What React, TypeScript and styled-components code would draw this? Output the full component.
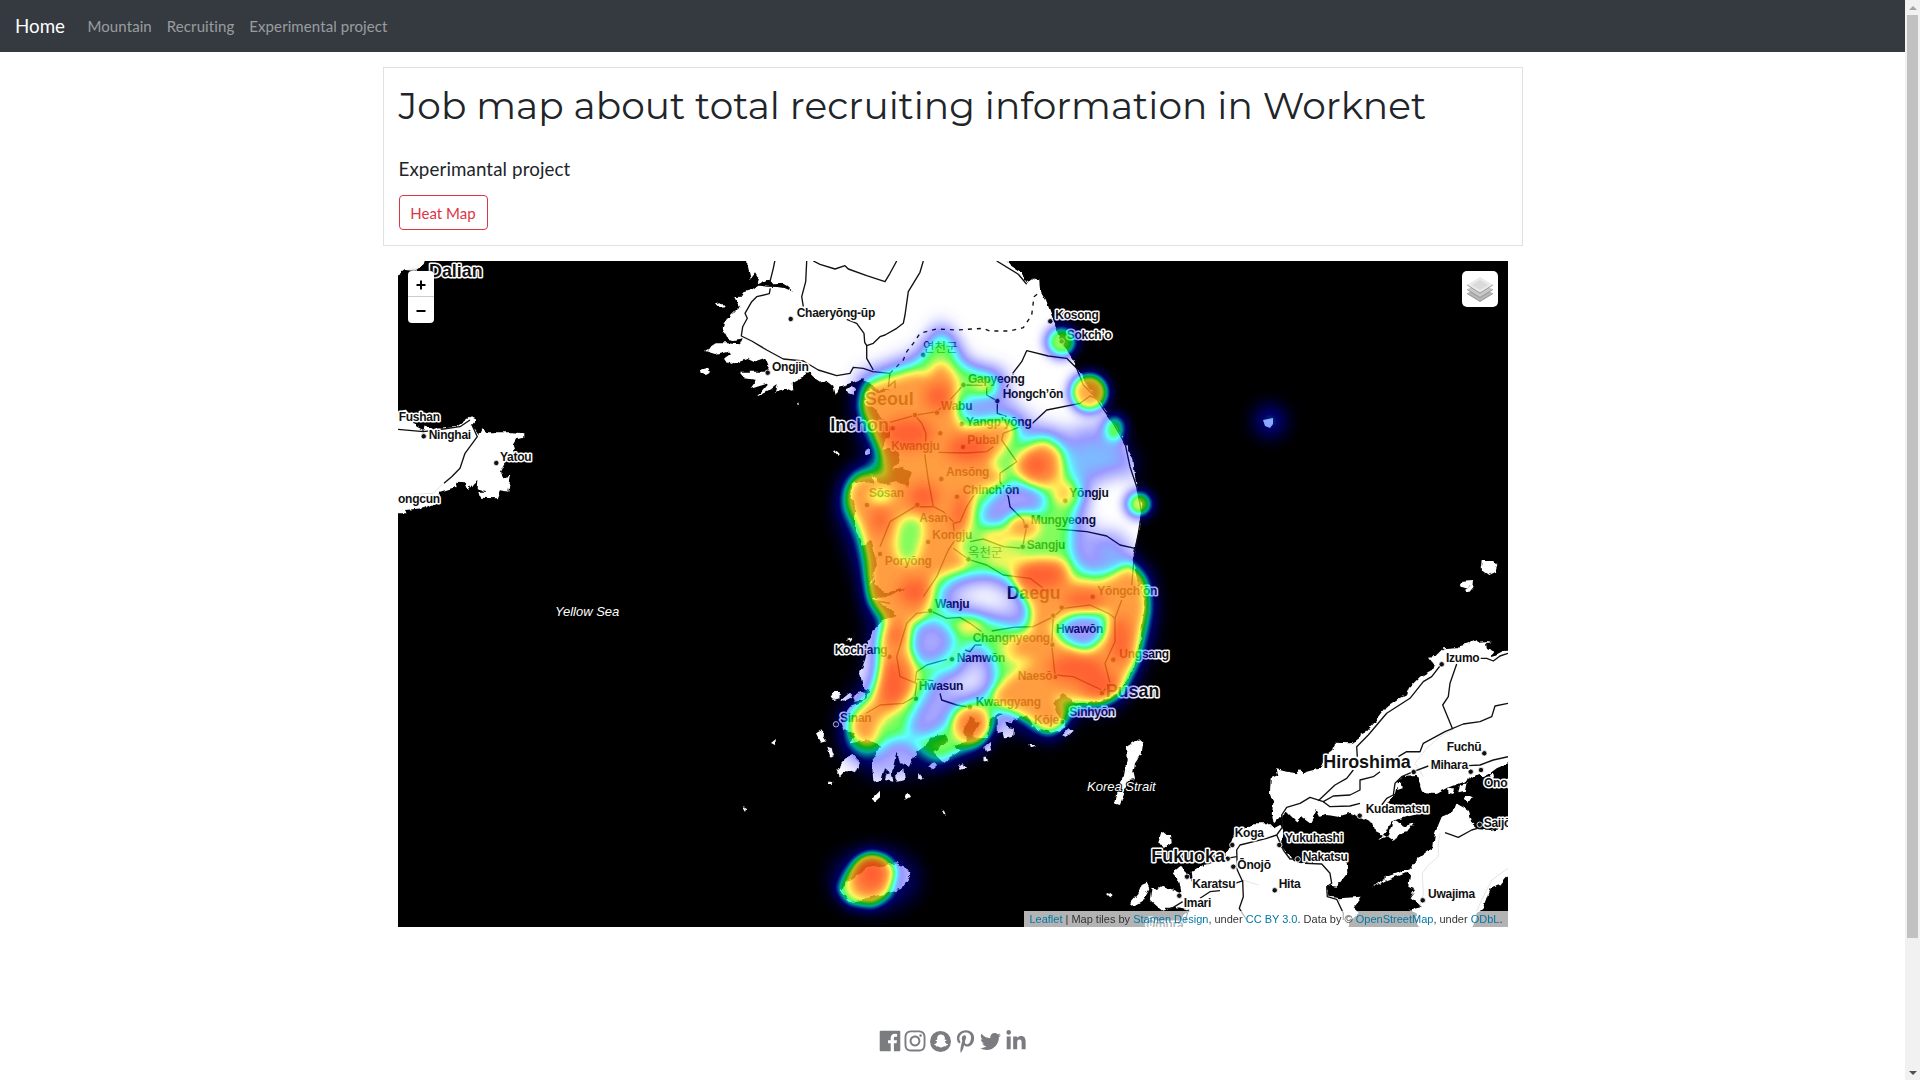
import React from "react";
import styled, { createGlobalStyle } from "styled-components";
import { FaInstagram, FaSnapchatGhost, FaPinterestP, FaTwitter, FaLinkedinIn } from "react-icons/fa";

const GlobalStyle = createGlobalStyle`
  *, *::before, *::after { box-sizing: border-box; }
  html, body { margin: 0; height: 1080px; overflow: hidden; background: #fff; }
  body { font: 400 15px/1.5 Lato, sans-serif; color: #212529; }
  a { text-decoration: none; }
`;

const Shell = styled.div`display: flex; width: 1920px; height: 1080px; overflow: hidden;`;
const Page = styled.div`flex: 1; min-width: 0; display: flex; flex-direction: column; align-items: center;`;
const Navbar = styled.nav`
  align-self: stretch; height: 52px; flex: none; display: flex; align-items: center;
  padding: 0 15px; background: #343a40;
`;
const Brand = styled.a`font-size: 18.75px; color: #fff; margin-right: 15px;`;
const NavLink = styled.a`padding: 0 7.5px; color: rgba(255, 255, 255, 0.5); letter-spacing: 0.09px;`;
const Intro = styled.header`
  width: 1140px; height: 179px; margin-top: 15px; padding: 15px; border: 1px solid #dee2e6;
  display: flex; flex-direction: column; align-items: flex-start;
`;
const Title = styled.h1`
  margin: 0; font: 400 37.5px/45px Montserrat, Inter, sans-serif; letter-spacing: 0.04px; white-space: nowrap;
`;
const Subtitle = styled.h2`margin: 29px 0 0; font: 400 18.75px/23px Lato, sans-serif; letter-spacing: 0.1px;`;
const OutlineButton = styled.button`
  margin-top: 15px; height: 35px; width: 89px; padding: 0; border: 1px solid #dc3545; border-radius: 4px;
  background: transparent; color: #dc3545; font: 400 15px Lato, sans-serif;
`;
const MapFrame = styled.main`
  position: relative; width: 1110px; height: 666px; margin-top: 15px; flex: none; overflow: hidden; background: #000;
`;
const MapDrawing = styled.svg`display: block; width: 1110px; height: 666px;`;
const ZoomControl = styled.div`
  position: absolute; left: 10px; top: 10px; width: 26px; border-radius: 4px; background: #fff;
  overflow: hidden; box-shadow: 0 1px 5px rgba(0, 0, 0, 0.65);
`;
const ZoomButton = styled.div<{ $divided?: boolean }>`
  height: 26px; display: flex; align-items: center; justify-content: center;
  padding-top: ${(p) => (p.$divided ? 3 : 2)}px;
  border-bottom: ${(p) => (p.$divided ? "1px solid #ccc" : "0")};
  svg { display: block; }
`;
const LayersControl = styled.div`
  position: absolute; right: 10px; top: 10px; width: 36px; height: 36px; border-radius: 5px; background: #fff;
  display: grid; place-items: center;
`;
const Attribution = styled.div`
  position: absolute; right: 0; bottom: 0; height: 16px; padding: 0 5px; white-space: nowrap;
  font: 11px/16px "Liberation Sans", Arial, sans-serif; color: #333; background: rgba(255, 255, 255, 0.7);
  a { color: #0078a8; }
`;
const Social = styled.footer`
  margin-top: 101px; height: 26px; padding-left: 2px; display: flex; align-items: center; gap: 4px; color: #7b7c80;
  svg { display: block; }
`;
const Scrollbar = styled.div`
  width: 15px; flex: none; background: #f1f1f1; display: flex; flex-direction: column; align-items: center;
`;
const Arrow = styled.div<{ $down?: boolean }>`
  height: 15px; display: grid; place-items: center;
  &::before {
    content: ""; border: 4px solid transparent; border-top-width: ${(p) => (p.$down ? 4 : 0)}px;
    border-bottom-width: ${(p) => (p.$down ? 0 : 4)}px;
    border-top-color: #505050; border-bottom-color: ${(p) => (p.$down ? "#505050" : "#a3a3a3")};
  }
`;
const Thumb = styled.div`width: 11px; height: 923px; background: #c1c1c1; margin-bottom: auto;`;

// Map sheets are digitised at three units per pixel; each has its own origin.
type Sheet = [number, number];
const NORTH: Sheet = [690, 255];
const MID: Sheet = [800, 300];
const SOUTH: Sheet = [800, 560];
const JAPAN: Sheet = [1120, 560];
const CHINA: Sheet = [390, 255];

const place = ([ox, oy]: Sheet, points: string) =>
  points.trim().split(/\s+/).map((p) => {
    const [x, y] = p.replace("M", "").split(",").map(Number);
    return `${p.startsWith("M") ? "M" : ""}${(ox + x / 3).toFixed(1)},${(oy + y / 3).toFixed(1)}`;
  }).join(" ");

const shape = (...parts: [Sheet, string][]) => "M" + parts.map(([s, p]) => place(s, p)).join(" ") + "Z";
const line = (s: Sheet, p: string) => "M" + place(s, p);

const KOREA = shape(
  [NORTH, "172,0 172,30 182,72 195,55 205,70 200,88 235,74 245,85 275,84 290,92 310,110 285,100 262,96 235,95 205,92 190,103 160,112 155,125 133,126 140,140 148,155 128,175 108,195 98,230 108,248 130,255 158,250 150,268 110,265 80,265 45,288 75,297 110,288 120,298 105,308 120,330 150,318 175,308 200,320 230,310 238,330 232,350 200,350 150,350 165,370 200,375 180,402 235,385 200,425 240,405 260,390 255,410 290,400 310,408 308,385 335,370 350,345 370,365 400,385 415,380 430,392 437,420 450,395 480,385 520,370 565,405 600,405"],
  [MID, "235,280 210,265 205,310 230,330 240,350 270,380 270,410 250,430 245,450 285,440 300,480 280,510 310,500 335,520 325,560 300,545 260,552 240,550 210,520 225,550 160,545 150,580 165,620 165,680 185,740 215,720 230,790 210,860"],
  [SOUTH, "220,60 250,100 315,85 270,110 215,115 260,140 290,165 250,180 220,210 205,245 195,300 180,340 190,385 215,390 185,430 150,440 120,480 130,510 165,520 150,550 210,540 240,560 215,600 220,665 245,660 255,625 275,640 290,575 300,610 330,620 350,575 380,555 390,530 430,525 445,540 420,560 400,575 430,605 480,570 460,555 500,545 490,510 510,470 540,490 515,535 560,530 570,480 600,460 640,480 680,465 700,500 760,520 800,500 775,470 760,430 790,400 830,430 900,425 960,400 1000,330 1020,260 1025,200 1035,130 1012,60 998,0"],
  [MID, "1005,740 1015,700 1025,620 1005,530 1000,480 960,400 900,310 850,240 820,180 780,120 760,60 738,0"],
  [NORTH, "1068,135 1050,105 1048,75 1030,70 1015,80 990,50 960,30 935,0"],
);

const LAND = [
  KOREA,
  shape([JAPAN, "1220,260 1164,270 1135,285 1110,292 1120,275 1100,265 1098,250 1115,245 1080,248 1060,238 1045,250 1020,255 1010,265 970,268 950,287 927,290 942,310 935,330 900,350 870,380 860,405 830,420 800,440 770,480 740,515 720,525 715,540 690,550 645,548 640,570 620,585 600,625 560,635 550,642 540,627 530,640 500,635 470,628 475,645 452,655 450,700 460,730 455,760 462,790 480,770 500,755 530,785 545,772 570,790 590,750 600,770 620,765 650,770 690,758 720,770 760,790 765,812 800,830 775,840 800,812 812,785 860,770 910,758 915,735 880,745 830,735 800,730 825,700 835,660 850,648 890,645 905,690 915,700 950,702 990,680 1030,665 1060,650 1075,640 1090,650 1110,640 1130,625 1164,610 1220,600"]),
  shape([JAPAN, "335,850 350,810 380,805 400,790 445,790 462,805 480,795 490,820 485,860 510,890 540,910 590,905 680,900 682,940 650,980 620,975 625,1010 660,1015 725,1010 700,1040 720,1060 690,1080 680,1125 170,1125 190,1065 210,1050 165,1040 130,1055 90,1020 95,980 110,990 130,978 160,990 185,1002 178,965 155,940 180,920 200,945 220,970 215,935 250,915 300,905 320,880"]),
  shape([JAPAN, "1010,728 1040,745 1055,790 1075,808 1110,810 1220,790 1220,940 1164,945 1140,975 1110,985 1090,1040 1070,1060 1050,1125 900,1125 890,1060 865,1050 905,1040 870,1010 885,990 865,980 870,950 860,935 800,960 760,980 800,950 870,925 900,890 940,860 945,820 965,770 1000,755"]),
  shape([CHINA, "-20,465 24,472 45,462 60,485 80,515 100,525 105,512 140,523 200,515 240,485 258,495 245,512 265,540 275,518 290,532 370,532 400,535 400,545 380,550 368,570 375,592 345,620 330,650 340,670 362,665 355,710 330,705 320,730 270,728 265,710 290,710 260,700 262,675 250,685 235,705 225,682 195,680 200,695 150,710 145,740 100,760 45,765 50,775 -20,775"]),
  shape([CHINA, "-20,0 108,0 98,30 75,48 45,45 24,60 -20,80"]),
  shape([SOUTH, "1018,535 1030,545 1025,580 1005,610 1000,635 1005,658 985,660 978,685 970,705 960,735 943,730 950,690 970,655 980,600 978,560"]),
  shape([SOUTH, "140,965 200,925 290,910 315,920 333,945 300,990 240,1005 150,1027 122,995"]),
  shape([JAPAN, "125,812 140,825 153,825 155,850 130,865 115,845"]),
  shape([JAPAN, "80,968 88,985 70,1020 40,1038 30,1030 55,1000 65,975"]),
  shape([JAPAN, "1085,0 1120,0 1132,15 1125,35 1105,45 1082,28"]),
  shape([JAPAN, "1018,80 1030,62 1062,60 1060,82 1045,100 1035,90 1055,75 1040,85"]),
  shape([JAPAN, "820,780 840,790 850,800 885,790 870,810 840,820 825,845 805,830"]),
  shape([JAPAN, "1020,675 1040,670 1035,695 1015,700"]),
  shape([JAPAN, "985,685 1005,685 1000,702 985,698"]),
  shape([JAPAN, "1040,705 1055,712 1045,728 1033,720"]),
  shape([JAPAN, "1110,645 1120,640 1122,655 1112,660"]),
  shape([JAPAN, "830,670 845,668 848,685 832,690"]),
  shape([SOUTH, "108,640 125,610 155,580 180,605 165,640 140,630 120,652"]),
  shape([SOUTH, "260,640 275,635 280,665 255,660"]),
  shape([SOUTH, "285,650 310,625 315,660 295,665"]),
  shape([SOUTH, "590,470 610,460 640,480 635,490 615,485 620,500 642,505 640,530 615,535 610,515 590,520"]),
  shape([SOUTH, "218,715 240,692 240,712 225,725"]),
  shape([SOUTH, "312,705 322,698 330,710 318,718"]),
  shape([SOUTH, "92,410 105,390 120,395 118,415 102,420"]),
  shape([SOUTH, "120,420 145,400 160,400 155,412 130,425"]),
  shape([SOUTH, "160,408 180,395 200,400 190,420 165,425"]),
  shape([SOUTH, "48,520 70,508 68,530 78,545 62,548"]),
  shape([SOUTH, "82,560 95,565 102,585 92,590"]),
  shape([SOUTH, "140,240 160,232 152,245"]),
  shape([SOUTH, "350,655 358,640 372,658 362,662"]),
  shape([SOUTH, "475,615 488,610 495,625 482,630"]),
  shape([SOUTH, "385,620 400,605 415,615 400,628"]),
  shape([SOUTH, "545,590 560,590 565,605 555,600"]),
  shape([SOUTH, "552,560 570,545 572,570 558,575"]),
  shape([SOUTH, "685,553 705,560 690,565"]),
  shape([SOUTH, "785,525 805,505 818,515 800,532"]),
  shape([SOUTH, "84,665 100,665 98,672 86,672"]),
  shape([SOUTH, "428,748 434,750 440,764 432,760"]),
  shape([SOUTH, "918,1005 930,998 938,1005 928,1015"]),
  shape([NORTH, "78,145 92,142 105,157 90,158"]),
  shape([NORTH, "30,345 55,338 60,352 45,360 32,355"]),
  shape([NORTH, "318,442 325,442 326,450 320,450"]),
  shape([NORTH, "432,592 440,588 450,598 442,602"]),
  shape([NORTH, "525,588 540,580 540,595 530,598"]),
  shape([NORTH, "468,402 485,395 495,405 490,420 475,415"]),
  "M771,743 776,739 775,745Z", "M743,806 747,808 746,811Z",
];

const ROADS = [
  line(NORTH, "258,0 250,40 240,80"),
  line(NORTH, "241,100 238,116 200,125 185,140 165,175 172,190 158,215 154,243 185,258 230,285 280,312 340,318 385,345 440,362 480,355 490,337 520,340 548,350 600,355"),
  line(NORTH, "350,18 347,80 335,125 340,155"),
  line(NORTH, "370,18 390,28 435,42 465,32 475,42 530,62 585,80 600,55 620,18"),
  line(NORTH, "470,193 500,205 522,235 524,262 530,272 530,310 550,345"),
  line(NORTH, "700,18 690,52 655,110 645,180 640,205 620,220 585,240 570,245 550,265 530,272"),
  line(NORTH, "920,18 985,58 1010,88"),
  line(NORTH, "600,355 595,395 615,378 615,400"),
  line(MID, "638,220 665,185 680,152 745,168 800,175 830,205 850,255 885,290 905,320 940,370 975,430 990,500 1010,560 1025,640 1015,700 1005,750"),
  line(MID, "620,262 640,222 M695,372 740,330 840,310 870,288 890,295"),
  line(MID, "490,255 560,256 560,285 592,303 592,340 620,350"),
  line(MID, "344,346 365,370 378,400 375,470 385,540 400,620 430,635 460,665"),
  line(MID, "270,367 344,346 410,335 450,300 490,255"),
  line(MID, "415,457 500,459 560,455 580,440"),
  line(MID, "660,380 610,400 605,420 650,485 600,520 600,545 625,590 630,620 670,660 678,690 668,740"),
  line(MID, "525,580 500,620 480,665 460,670 465,720 445,750 410,830 370,890"),
  line(MID, "398,620 345,620 270,665 240,740"),
  line(MID, "770,687 860,695 920,708 960,735 1005,745 995,855"),
  line(MID, "510,725 550,717 610,740 668,745"),
  line(MID, "460,745 505,778 560,795 610,825 690,835 730,865 760,900"),
  line(SOUTH, "390,155 350,160 320,190 290,290 300,350 350,370 345,410 310,430 240,435 190,465"),
  line(SOUTH, "215,120 270,130 M390,152 440,175 480,172 510,190 545,215"),
  line(SOUTH, "575,213 640,202 700,200 760,170 790,145 870,135 925,160 945,175 965,120"),
  line(SOUTH, "945,175 945,245 915,310 930,370 905,400"),
  line(SOUTH, "760,165 755,255 765,345 820,350 905,390"),
  line(SOUTH, "345,370 350,335 380,315 440,298 M495,270 510,275 525,255 545,255"),
  line(SOUTH, "350,358 400,362 M420,400 425,420 470,435 510,442"),
  line(JAPAN, "962,315 935,350 910,365 870,415 800,460 745,525 710,560 712,590 M700,630 680,655 645,675 595,722"),
  line(JAPAN, "1010,312 990,370 985,410 968,435 998,508"),
  line(JAPAN, "1164,430 1125,438 1115,470 1080,485 1030,492 975,515 910,550 900,575 860,575 835,590"),
  line(JAPAN, "780,635 760,650 720,660 720,690 690,705 640,708 610,725 570,712 540,730 500,742 485,765 488,800 470,825 440,835 360,855 350,870 352,930 368,965 370,1010 358,1045 380,1080"),
  line(JAPAN, "610,725 630,740 690,738 720,730 M785,735 800,715 820,705 825,670 845,650 880,635 925,618"),
  line(JAPAN, "1045,617 1080,615 1120,600 1164,590 M1080,295 1100,295 1120,303 1140,288 1164,280"),
  line(JAPAN, "470,825 490,870 510,897 530,897 M555,910 605,912 630,940 635,970 620,980 622,1010 650,1018 670,1060 670,1080"),
  line(JAPAN, "320,895 350,890 M345,970 370,962 M240,1015 270,995 300,992 M188,1025 155,1045 135,1045 M205,1050 195,1085"),
  line(JAPAN, "975,818 1015,832 1055,810 1080,803"),
  line(CHINA, "24,523 100,530 140,525 210,515 240,495 M245,508 262,545 225,595 210,640 185,665 162,685"),
];
const MINOR_ROADS = [
  line(JAPAN, "998,508 960,530 920,565 885,610 910,650 M960,820 955,850 955,890 925,915 907,940 910,1000 900,1040 M1164,925 1115,960 1080,1030 1060,1080 M370,960 415,975"),
  line(CHINA, "160,685 130,715 70,718"),
];
const BORDER = line(NORTH, "600,355 640,315 650,290 670,265 690,235 740,222 800,225 880,220 900,228 960,228 1000,218 1025,180 1032,125 1045,115");

const CITIES: [Sheet, string][] = [
  [NORTH, "302,192 233,353 820,390 922,438 741,473 815,507 751,535 819,576 754,672 801,725 675,480 608,520 1081,199 1115,259 700,300"],
  [MID, "796,602 678,679 668,740 384,726 505,778 240,762 201,615 352,615 878,890"],
  [SOUTH, "390,152 785,143 760,167 268,290 456,298 757,254 765,351 940,299 906,400 348,416 510,442 108,493 787,485"],
  [JAPAN, "965,313 1093,580 1052,635 1083,630 881,636 719,767 337,855 478,855 323,896 340,920 533,898 201,950 464,991 178,1007 908,1021 1079,794"],
  [CHINA, "101,544 319,624"],
];
const DOTS = CITIES.flatMap(([s, p]) => p.split(" ").map((q) => place(s, q).split(",")));

type Label = [Sheet, number, number, string, number?];
const LABELS: Label[] = [
  [CHINA, 117, 65, "Dalian", 17.9], [CHINA, 26, 498, "Fushan"], [CHINA, 116, 551, "Ninghai"],
  [CHINA, 330, 617, "Yatou"], [CHINA, 24, 745, "ongcun"],
  [NORTH, 320, 186, "Chaeryŏng-ŭp"], [NORTH, 246, 347, "Ongjin"],
  [MID, 766, 56, "Kosong"], [MID, 800, 117, "Sokch’o"], [MID, 504, 248, "Gapyeong"],
  [MID, 608, 295, "Hongch’ŏn"], [MID, 423, 330, "Wabu"], [MID, 498, 379, "Yangp’yŏng"],
  [MID, 502, 433, "Pubal"], [MID, 195, 316, "Seoul", 17.9], [MID, 91, 393, "Inchon", 17.9],
  [MID, 274, 450, "Kwangju"], [MID, 438, 529, "Ansŏng"], [MID, 488, 582, "Chinch’ŏn"],
  [MID, 207, 590, "Sŏsan"], [MID, 808, 592, "Yŏngju"], [MID, 358, 665, "Asan"],
  [MID, 692, 671, "Mungyeong"], [MID, 397, 718, "Kongju"], [MID, 680, 746, "Sangju"],
  [MID, 254, 796, "Poryŏng"], [MID, 620, 896, "Daegu", 17.6], [MID, 892, 884, "Yŏngch’ŏn"],
  [SOUTH, 405, 144, "Wanju"], [SOUTH, 768, 218, "Hwawŏn"], [SOUTH, 518, 247, "Changnyeong"],
  [SOUTH, 104, 283, "Koch’ang"], [SOUTH, 958, 294, "Ungsang"], [SOUTH, 470, 305, "Namwŏn"],
  [SOUTH, 653, 359, "Naesŏ"], [SOUTH, 917, 412, "Pusan", 17.9], [SOUTH, 356, 391, "Hwasun"],
  [SOUTH, 527, 437, "Kwangyang"], [SOUTH, 808, 467, "Sinhyŏn"], [SOUTH, 120, 485, "Sinan"],
  [SOUTH, 702, 491, "Kŏje"],
  [JAPAN, 978, 306, "Izumo"], [JAPAN, 980, 572, "Fuchū"], [JAPAN, 610, 625, "Hiroshima", 17.9],
  [JAPAN, 932, 628, "Mihara"], [JAPAN, 1092, 681, "Onomichi"], [JAPAN, 737, 760, "Kudamatsu"],
  [JAPAN, 1091, 801, "Saijō"], [JAPAN, 344, 830, "Koga"], [JAPAN, 495, 847, "Yukuhashi"],
  [JAPAN, 94, 905, "Fukuoka", 17.9], [JAPAN, 548, 904, "Nakatsu"], [JAPAN, 352, 926, "Ōnojō"],
  [JAPAN, 217, 983, "Karatsu"], [JAPAN, 476, 983, "Hita"], [JAPAN, 191, 1040, "Imari"],
  [JAPAN, 924, 1013, "Uwajima"], [JAPAN, 78, 1108, "Ōmura"],
];

// Density contours, lowest to highest.
const HEAT_FAINT =
  shape([MID, "425,50 510,180 620,210 640,310 720,370 800,390 890,360 960,390 1010,470 1020,550 960,520 900,525 860,590 860,660 900,700 950,690 1000,750 1060,820 1075,920 1060,1040 1000,1170 940,1240 830,1240 760,1330 600,1290 560,1350 400,1420 220,1440 120,1360 110,1240 190,1130 200,1000 180,880 100,640 120,530 190,470 150,330 170,220 350,150"])
  + shape([SOUTH, "465,105 510,80 580,75 630,120 640,155 560,145 480,120"])
  + shape([SOUTH, "440,370 500,350 530,310 550,340 540,380 480,395"]);
const HEAT_WARM = [
  shape(
    [MID, "425,85 465,120 485,185 530,205 590,215 605,250 590,295 545,300 495,305 480,335 515,350 590,340 650,345 668,380 655,430 700,400 760,400 795,440 815,520 855,560 860,600 830,640 820,700 820,760 850,810 930,810 990,775 1045,830"],
    [SOUTH, "1060,120 1050,200 1035,260 1010,335 970,410 900,445 840,440 800,505 750,540 690,505 660,465 590,440 580,510 540,570 470,590 420,620 370,590 330,550 280,540 240,580 190,595 140,560 128,490 165,430 210,390 232,330 225,250 245,185 200,140 188,60"],
    [MID, "190,830 170,720 140,660 118,620 125,560 160,508 215,498 235,460 205,420 175,350 170,290 190,235 280,200 350,180 380,130"],
  ) + shape([MID, "545,640 580,600 630,555 700,565 740,610 705,635 650,630 600,670 550,670"])
    + shape([SOUTH, "420,110 450,70 510,50 580,45 645,80 685,140 670,200 600,185 520,160 440,155"])
    + shape([SOUTH, "340,240 360,190 415,185 460,235 445,275 405,305 355,305"])
    + shape([SOUTH, "775,200 830,170 905,175 900,225 860,260 805,240"])
    + shape([SOUTH, "385,400 410,345 475,335 500,260 550,260 582,325 572,395 515,420 455,440 435,495 375,525 320,525 350,460"]),
];
const HEAT_HOT = [
  shape(
    [MID, "260,240 350,215 385,225 405,190 440,190 460,220 475,245 465,300 470,350 490,390 550,375 620,365 645,390 610,445 570,490 620,540 535,570 512,620 495,670 475,750 510,795 410,830 385,875"],
    [SOUTH, "375,175 330,190 325,260 350,330 340,390 290,440 240,490 215,555 160,530 150,480 215,420 245,350 240,250 260,180 210,110 203,40"],
    [MID, "205,780 182,680 150,620 145,570 175,530 265,530 250,480 225,400 185,320 200,260"],
  ) + shape([MID, "295,670 325,645 370,660 370,710 345,790 295,780 285,730"])
    + shape([MID, "210,575 270,565 275,590 245,610 215,600"]),
  shape(
    [MID, "640,820 690,785 790,780 815,840 900,850 950,820 990,795 1033,840"],
    [SOUTH, "1040,150 1018,230 1008,300 958,390 900,430 820,420 765,410 790,450 795,490 745,515 690,480 590,440 575,400 630,350 700,300 640,290 640,240 690,215 695,150 655,90"],
  ) + shape([SOUTH, "750,200 825,155 925,155 928,225 860,282 785,250"]),
  shape([MID, "640,500 675,455 730,425 780,455 785,535 740,565 685,550"]),
];
const SPOTS: [Sheet, number, number, number, number, number][] = [
  [MID, 785, 125, 52, 52, 0.74], [MID, 868, 277, 66, 66, 0.7], [MID, 945, 382, 38, 45, 0.66],
  [MID, 1018, 612, 45, 45, 0.78], [SOUTH, 515, 493, 60, 60, 0.25],
];
const CORES: [Sheet, number, number, number, number][] = [
  [MID, 415, 290, 40, 40], [MID, 325, 400, 75, 45], [MID, 505, 445, 65, 40], [MID, 370, 590, 45, 38],
  [MID, 485, 645, 25, 60], [MID, 710, 495, 42, 38], [MID, 345, 875, 48, 40],
  [MID, 240, 660, 25, 40], [SOUTH, 720, 45, 75, 42], [SOUTH, 290, 225, 25, 30], [SOUTH, 280, 370, 42, 75],
  [SOUTH, 830, 325, 85, 40], [SOUTH, 900, 375, 60, 38], [SOUTH, 850, 120, 60, 25],
  [SOUTH, 960, 240, 30, 70], [SOUTH, 215, 940, 38, 45],
];
const WARM_PATCHES: [Sheet, number, number, number, number, number?][] = [
  [MID, 868, 277, 46, 46], [SOUTH, 515, 493, 50, 50], [MID, 790, 580, 30, 34, 0.75],
  [SOUTH, 510, 195, 40, 20, 0.7], [MID, 550, 258, 28, 16, 0.7], [MID, 670, 680, 48, 38, 0.95],
  [MID, 590, 710, 45, 28, 0.6], [SOUTH, 650, 270, 50, 45, 0.45], [MID, 620, 780, 60, 35, 0.4],
];

const Ellipses = ({ items }: { items: [Sheet, number, number, number, number, number?][] }) => (
  <>
    {items.map(([s, x, y, rx, ry, o], i) => (
      <ellipse key={i} cx={s[0] + x / 3} cy={s[1] + y / 3} rx={rx / 3} ry={ry / 3} opacity={o ?? 1} />
    ))}
  </>
);

const blurBox = { x: 398, y: 200, width: 1110, height: 800, filterUnits: "userSpaceOnUse" as const };
const BLURS: Record<string, number> = { soft: 9, warm: 7.2, spot: 5.4, core: 7 };

const HeatLayer = () => (
  <g filter="url(#palette)">
    <g filter="url(#soft)" opacity={0.34}>
      <path d={HEAT_FAINT} fillRule="evenodd" />
    </g>
    <g filter="url(#soft)">
      <ellipse cx={875} cy={879} rx={46} ry={33} opacity={0.36} />
      <ellipse cx={1270} cy={421} rx={16} ry={16} opacity={0.56} />
      <ellipse cx={1095} cy={460} rx={32} ry={22} opacity={0.24} />
      <ellipse cx={1110} cy={552} rx={14} ry={14} opacity={0.24} />
    </g>
    <g filter="url(#warm)" opacity={0.59}>
      {HEAT_WARM.map((d, i) => <path key={i} d={d} fillRule="evenodd" />)}
    </g>
    <g filter="url(#spot)">
      <Ellipses items={SPOTS} />
      <path opacity={0.65} d={shape([SOUTH, "210,868 265,885 295,925 275,1010 225,1050 140,1040 104,990 135,935 165,893"])} />
    </g>
    <g filter="url(#spot)" opacity={0.6}>
      {HEAT_HOT.map((d, i) => <path key={i} d={d} fillRule="evenodd" />)}
      <path d={shape([SOUTH, "185,900 250,900 275,940 255,990 215,1018 160,1005 150,955"])} />
      <Ellipses items={WARM_PATCHES} />
    </g>
    <g filter="url(#core)" opacity={0.65}><Ellipses items={CORES} /></g>
  </g>
);

const JobMap = () => (
  <MapDrawing viewBox="398 261 1110 666">
    <defs>
      <filter id="coast" {...blurBox}>
        <feTurbulence type="fractalNoise" baseFrequency="0.14" numOctaves={2} seed={4} result="n" />
        <feDisplacementMap in="SourceGraphic" in2="n" scale={5} xChannelSelector="R" yChannelSelector="G" />
      </filter>
      {Object.entries(BLURS).map(([id, deviation]) => (
        <filter key={id} id={id} {...blurBox}><feGaussianBlur stdDeviation={deviation} /></filter>
      ))}
      <filter id="palette" {...blurBox} colorInterpolationFilters="sRGB">
        <feColorMatrix values="0 0 0 1 0  0 0 0 1 0  0 0 0 1 0  0 0 0 1 0" />
        <feComponentTransfer>
          <feFuncR type="table" tableValues="0 0 0 0 0 0 0 0.05 1 1 1" />
          <feFuncG type="table" tableValues="0 0 0 0 0 0.5 1 1 0.95 0.5 0.14" />
          <feFuncB type="table" tableValues="1 1 1 1 1 1 1 0.1 0.15 0.1 0.04" />
          <feFuncA type="table" tableValues="0 0.1 0.2 0.3 0.4 0.52 0.64 0.7 0.76 0.84 0.87" />
        </feComponentTransfer>
      </filter>
    </defs>
    <rect x={398} y={261} width={1110} height={666} fill="#000" />
    <g filter="url(#coast)" fill="#fff">{LAND.map((d, i) => <path key={i} d={d} />)}</g>
    <path d="M1263,420 1273,418 1273,424 1270,428 1265,426Z" fill="#fff" />
    <g fill="none" stroke="#ddd" strokeWidth={0.8}>{MINOR_ROADS.map((d, i) => <path key={i} d={d} />)}</g>
    <g fill="none" stroke="#111" strokeWidth={1.35} strokeLinejoin="round">
      {ROADS.map((d, i) => <path key={i} d={d} />)}
      <path d={BORDER} strokeDasharray="4 5" />
    </g>
    {DOTS.map(([x, y], i) => <circle key={i} cx={x} cy={y} r={2.7} stroke="#fff" strokeWidth={0.8} fill="#111" />)}
    <g fontFamily="Liberation Sans, Arial, sans-serif" fontWeight={700} fill="#111" stroke="#fff" strokeWidth={3}
      strokeLinejoin="round" paintOrder="stroke">
      {LABELS.map(([s, x, y, text, size = 12]) => (
        <text key={text} x={s[0] + x / 3} y={s[1] + y / 3} fontSize={size} letterSpacing={size === 12 ? -0.25 : 0}>{text}</text>
      ))}
    </g>
    <g fontFamily="Noto Sans CJK KR, sans-serif" fontSize={12.5} fill="#222">
      <text x={923} y={352}>연천군</text>
      <text x={968} y={557}>옥천군</text>
    </g>
    <g fontFamily="Liberation Sans, Arial, sans-serif" fontStyle="italic" fontSize={13} fill="#fff" stroke="#000"
      strokeWidth={2} paintOrder="stroke">
      <text x={555} y={616}>Yellow Sea</text>
      <text x={1087} y={791}>Korea Strait</text>
    </g>
    <HeatLayer />
  </MapDrawing>
);

const FacebookIcon = styled.svg`margin: 0 -2px;`;
const InstagramIcon = styled(FaInstagram)`margin: 0 -2px 0 -1px;`;
const PinterestIcon = styled(FaPinterestP)`margin: 0 -1px 0 -1px;`;
const SnapDisc = styled.span`
  width: 21px; height: 21px; margin-left: 1px; border-radius: 50%; background: #7b7c80; color: #fff;
  display: grid; place-items: center;
`;

const FacebookMark = () => (
  <FacebookIcon width={24} height={24} viewBox="0 0 1792 1792" fill="currentColor">
    <path d="M1579 128q35 0 60 25t25 60v1366q0 35-25 60t-60 25h-391v-595h199l30-232h-229v-148q0-56 23.500-84t91.500-28l122-1v-207q-63-9-178-9-136 0-217.500 80t-81.500 226v171h-200v232h200v595h-735q-35 0-60-25t-25-60v-1366q0-35 25-60t60-25h1366z" />
  </FacebookIcon>
);

export default function App() {
  return (
    <>
      <GlobalStyle />
      <Shell>
        <Page>
          <Navbar>
            <Brand>Home</Brand>
            <NavLink>Mountain</NavLink>
            <NavLink>Recruiting</NavLink>
            <NavLink>Experimental project</NavLink>
          </Navbar>
          <Intro>
            <Title>Job map about total recruiting information in Worknet</Title>
            <Subtitle>Experimantal project</Subtitle>
            <OutlineButton>Heat Map</OutlineButton>
          </Intro>
          <MapFrame>
            <JobMap />
            <ZoomControl>
              <ZoomButton $divided>
                <svg width={10} height={10}><path d="M5 0.5V9.500M0.500 5H9.500" stroke="#000" strokeWidth={2} /></svg>
              </ZoomButton>
              <ZoomButton>
                <svg width={10} height={10}><path d="M0.500 5H9.500" stroke="#000" strokeWidth={2} /></svg>
              </ZoomButton>
            </ZoomControl>
            <LayersControl>
              <svg width={26} height={26} viewBox="0 0 26 26">
                <path d="M0 17.500 13 9.500 26 17.500 13 25.500Z" fill="#b5b5b5" />
                <path d="M0 17.500 13 25.500 26 17.500" fill="none" stroke="#888" strokeWidth={0.8} />
                <path d="M0 13.500 13 5.500 26 13.500 13 21.500Z" fill="#c8c8c8" />
                <path d="M0 13.500 13 21.500 26 13.500" fill="none" stroke="#8a8a8a" strokeWidth={0.8} />
                <path d="M0 9 13 1 26 9 13 17Z" fill="#e9e9e9" />
                <path d="M5 9 13 4 21 9 13 14Z" fill="#dadada" />
                <path d="M0 9 13 17 26 9" fill="none" stroke="#8a8a8a" strokeWidth={0.8} />
              </svg>
            </LayersControl>
            <Attribution>
              <a>Leaflet</a> | Map tiles by <a>Stamen Design</a>, under <a>CC BY 3.0</a>. Data by © <a>OpenStreetMap</a>, under <a>ODbL</a>.
            </Attribution>
          </MapFrame>
          <Social>
            <FacebookMark />
            <InstagramIcon size={24} />
            <SnapDisc><FaSnapchatGhost size={14} /></SnapDisc>
            <PinterestIcon size={23} />
            <FaTwitter size={21} />
            <FaLinkedinIn size={22} />
          </Social>
        </Page>
        <Scrollbar>
          <Arrow />
          <Thumb />
          <Arrow $down />
        </Scrollbar>
      </Shell>
    </>
  );
}
